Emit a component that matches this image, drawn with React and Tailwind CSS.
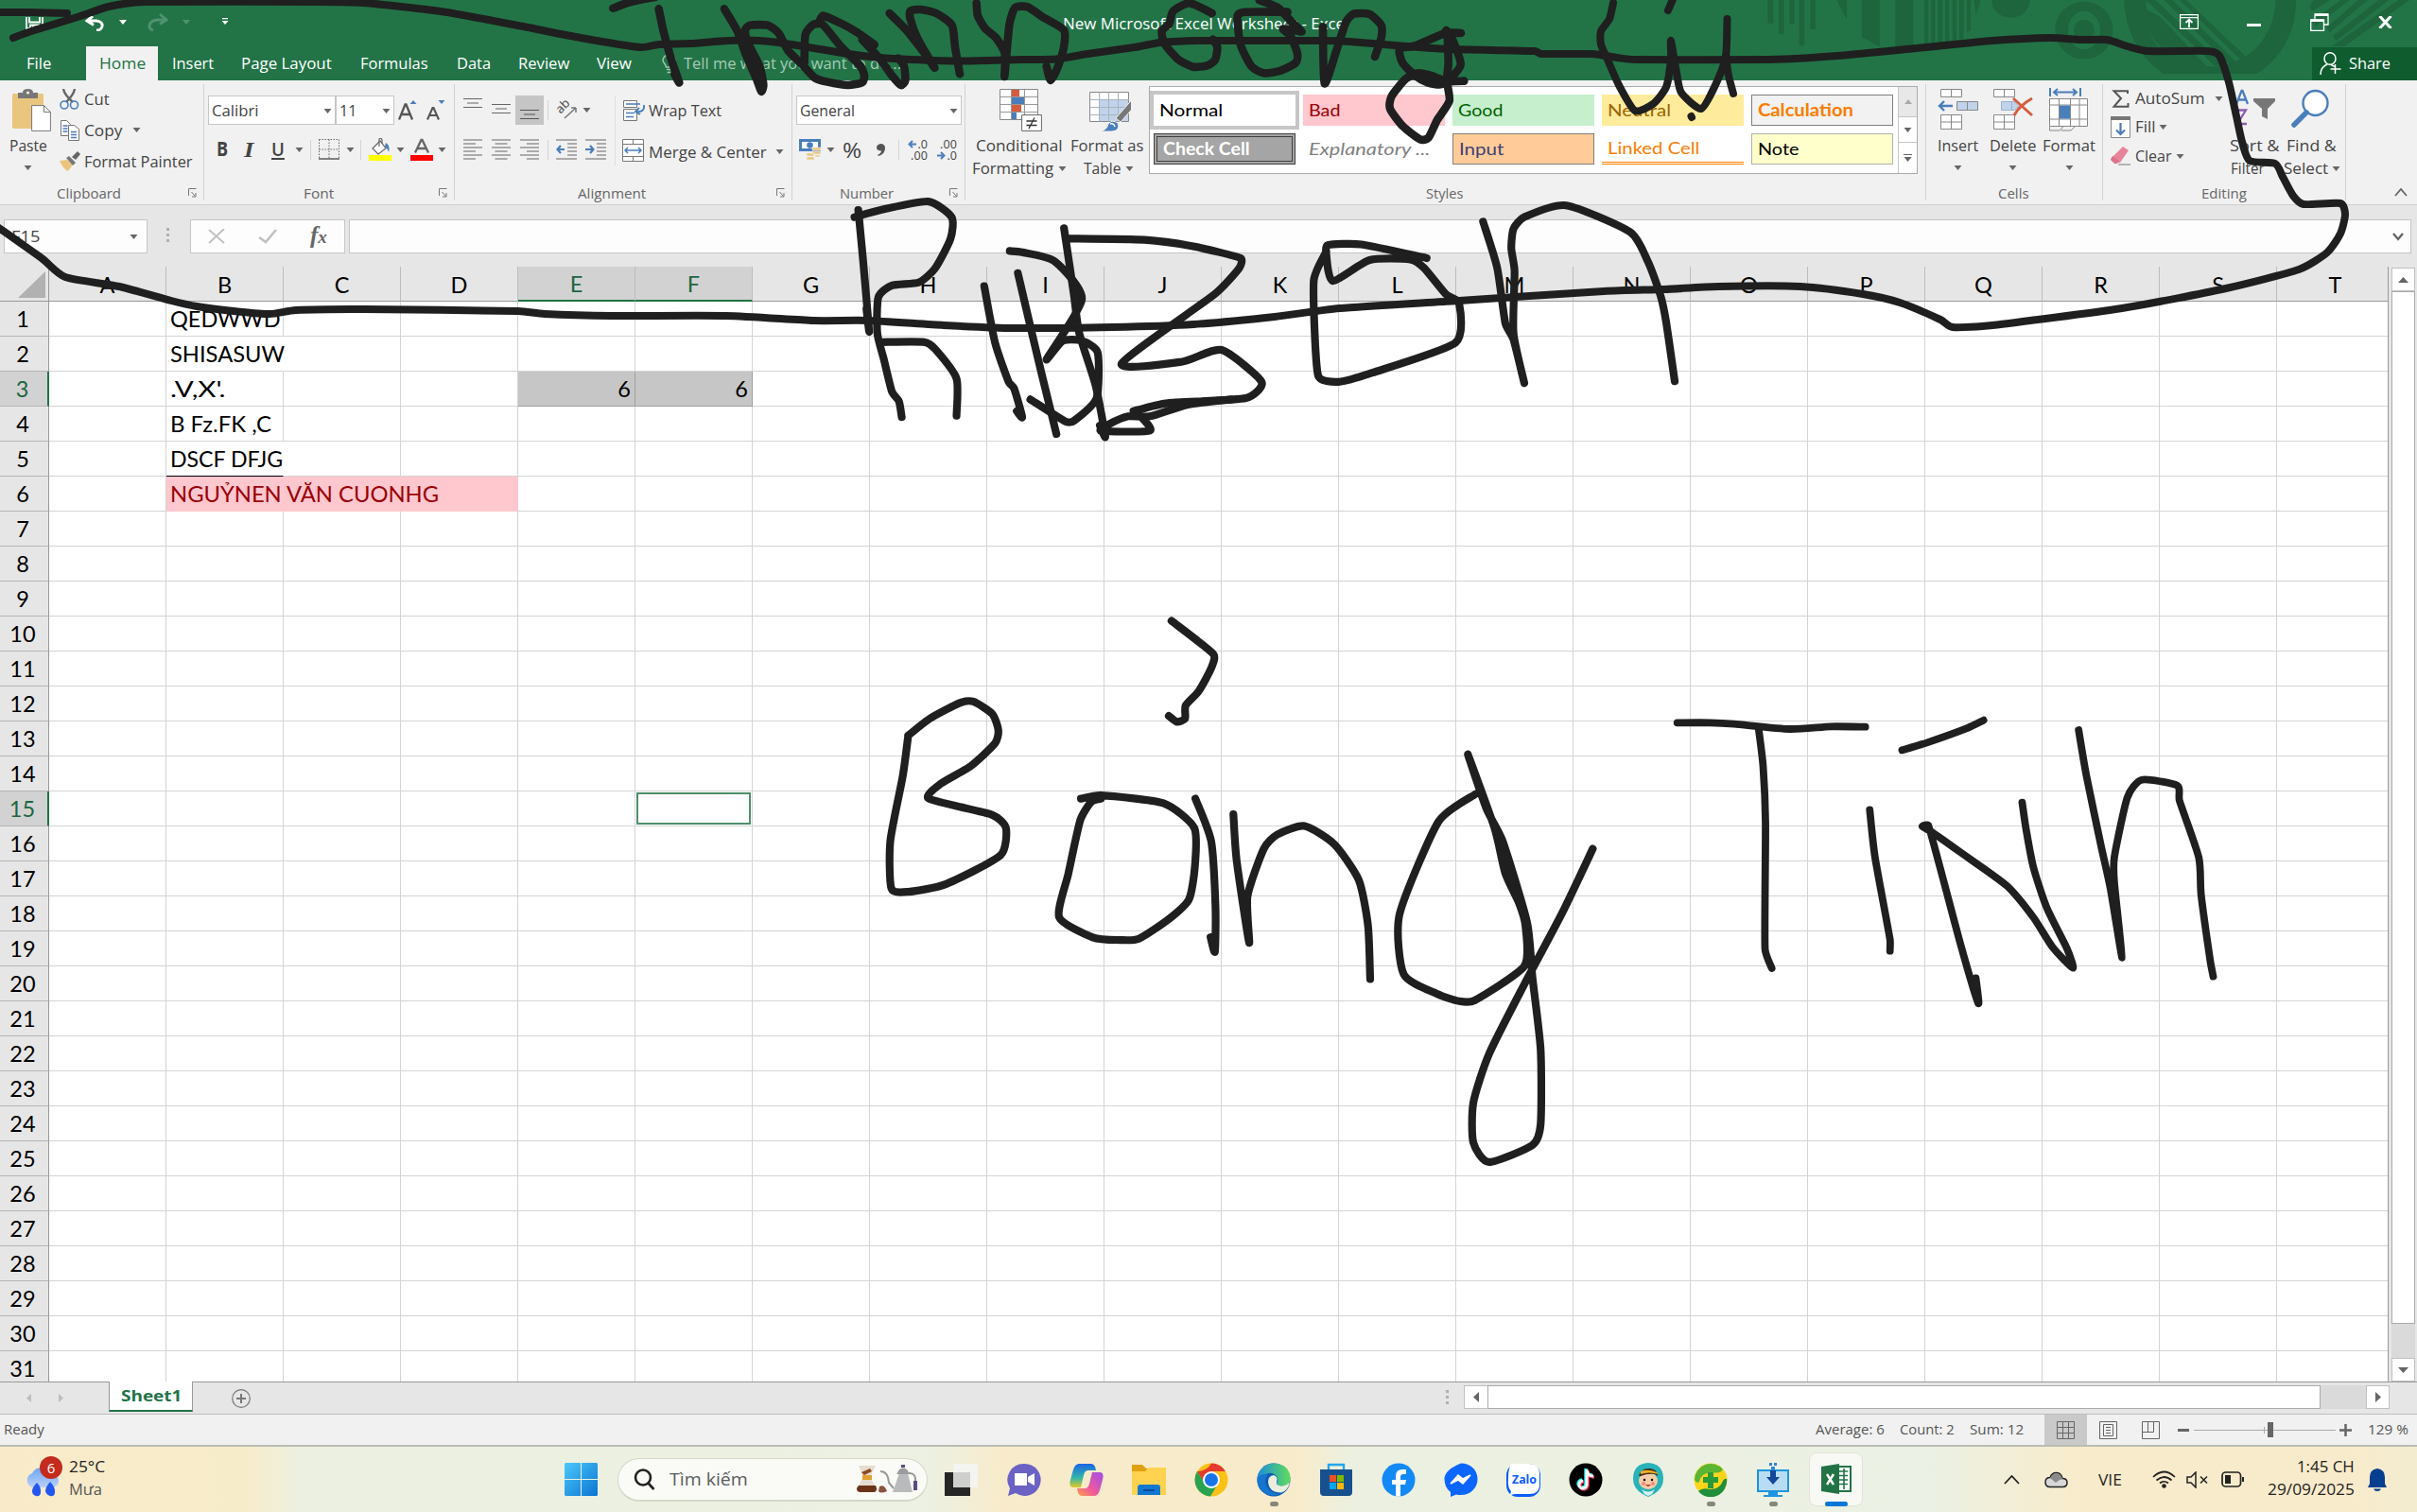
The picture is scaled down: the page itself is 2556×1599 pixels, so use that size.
import React, { useLayoutEffect, useRef } from "react";

/* Text squeezed or stretched horizontally to the width of its box. */
function Fit({ className = "", children }) {
  const outer = useRef(null);
  const inner = useRef(null);
  useLayoutEffect(() => {
    const run = () => {
      const o = outer.current;
      const i = inner.current;
      if (!o || !i || !i.offsetWidth) return;
      i.style.transform = `scaleX(${o.offsetWidth / i.offsetWidth})`;
    };
    run();
    document.fonts?.ready.then(run);
    window.addEventListener("load", run);
    return () => window.removeEventListener("load", run);
  }, []);
  return (
    <span ref={outer} className={"inline-flex shrink-0 justify-start whitespace-nowrap " + className}>
      <span ref={inner} className="inline-block origin-left">{children}</span>
    </span>
  );
}

const Caret = ({ className = "" }) => (
  <svg className={"h-[5px] w-[9px] shrink-0 " + className} viewBox="0 0 9 5"><path d="M0.5 0h8L4.5 5z" fill="#666" /></svg>
);
const Sep = ({ className = "" }) => <div className={"w-px shrink-0 bg-[#d4d4d4] " + className} />;
const GroupSep = () => <div className="mt-1 h-[123px] w-px shrink-0 bg-[#d2d2d2]" />;
const Launcher = ({ className = "" }) => (
  <svg className={"h-[10px] w-[9px] shrink-0 " + className} viewBox="0 0 9 10" fill="none" stroke="#777">
    <path d="M8.5 .5H.5V8M3.500 4l4 4.500M8 5v4H4" />
  </svg>
);

/* ---------- title bar ---------- */

function Pattern() {
  return (
    <svg className="absolute right-0 top-0 h-[85px] w-[706px]" viewBox="0 0 1568 255" preserveAspectRatio="none" fill="#1e643c">
      <path d="M43 0h13v74H43zM69 0h12v107H69zM94 0h12v74H94zM117 0h12v145h-12zM143 0h12v93h-12zM205 0h24v64zM264 0h42v148l-42-30zM343 0h42v148h-42zM411 0h9v142h-9zM427 0h9v140h-9zM443 0h10v138h-10zM460 0h9v136h-9zM477 0h9v132h-9zM493 0h10v124h-10zM511 0h9v94l-9 10zM528 0h15l-11 50z" />
      <ellipse cx="614" cy="0" rx="45" ry="56" />
      <ellipse cx="786" cy="96" rx="53" ry="76" fill="none" stroke="#1e643c" strokeWidth="30" />
      <ellipse cx="786" cy="96" rx="24" ry="33" />
      <path d="M880 0Q884 150 972 234H1192Q1284 150 1284 0H1236Q1234 100 1180 165Q1130 215 1070 210Q1000 200 955 140Q932 100 932 0z" />
      <path d="M932 30l30 20 112 160-50-10q-92-50-92-170zM932 0h22l160 208h-22zM974 0h20l150 198-16 8zM1010 0h16l142 182-12 10z" />
      <path d="M1325 0h38l-42 36-6-16zM1390 0h20l-82 84-6-18zM1430 0h22l-90 104-6-16zM1478 0h24l-124 130-8-16zM1525 0h26L1398 147h-30z" />
    </svg>
  );
}

function TitleBar() {
  return (
    <div className="relative h-[49px] w-full">
      <div className="relative flex h-[49px] items-start text-white">
        <svg className="ml-[27px] mt-[18px] h-[13px] w-[19px]" viewBox="0 0 19 13" fill="none" stroke="#fff" strokeWidth="1.800">
          <path d="M1 0v12h17V0M4 0v5.500h11V0M5 12V8.500h9V12M8 9v3" />
        </svg>
        <svg className="ml-[44px] mt-[17px] h-4 w-[21px]" viewBox="0 0 21 16" fill="none" stroke="#fff" strokeWidth="3">
          <path d="M8 0L2 5l7 4.500M2 5h10q7 1 6 6-1 4-6 4" />
        </svg>
        <svg className="ml-[15px] mt-[21px] h-[5px] w-[8px]" viewBox="0 0 8 5"><path d="M0 0h8L4 5z" fill="#fff" /></svg>
        <svg className="ml-[22px] mt-[14px] h-[19px] w-[22px]" viewBox="0 0 22 19" fill="none" stroke="#4f9270" strokeWidth="2.800">
          <path d="M13 1l7 6-7 4.500M20 7H10Q2 8 2 14q0 3 4 4" />
        </svg>
        <svg className="ml-[15px] mt-[21px] h-[5px] w-[8px]" viewBox="0 0 8 5"><path d="M0 0h8L4 5z" fill="#4f9270" /></svg>
        <svg className="ml-[33px] mt-[19px] h-[7px] w-[8px]" viewBox="0 0 8 7"><path d="M1 0h6v1.200H1zM.5 3h7L4 7z" fill="#fff" /></svg>
        <Fit className="ml-[882px] mt-[13px] w-[302px] text-[16px] leading-6">New Microsoft Excel Worksheet - Excel</Fit>
        <svg className="ml-[879px] mt-[15px] h-4 w-5" viewBox="0 0 20 16" fill="none" stroke="#fff" strokeWidth="1.200">
          <path d="M.6.6h18.800v14.800H.6zM.6 3.600h18.800" /><path d="M10 14V6M6.500 9L10 5.600 13.500 9" strokeWidth="1.800" />
        </svg>
        <div className="ml-[51px] mt-[25px] h-[3px] w-[15px] bg-white" />
        <svg className="ml-[52px] mt-[14px] h-[19px] w-5" viewBox="0 0 20 19" fill="none" stroke="#fff" strokeWidth="1.300">
          <path d="M5 6V1h14v11h-4M.7 7h13.800v11.300H.7z" /><path d="M5 1.800h14M.7 7.800h13.800" strokeWidth="2.600" />
        </svg>
        <svg className="ml-[52px] mt-[17px] h-[13px] w-[15px]" viewBox="0 0 15 13" stroke="#fff" strokeWidth="3"><path d="M1.500 0l12 13M13.500 0l-12 13" /></svg>
      </div>
    </div>
  );
}

function Tabs() {
  return (
    <div className="relative flex h-9 items-center text-[16px] text-white">
      <Fit className="ml-[28px] w-[26px]">File</Fit>
      <div className="ml-[37px] flex h-9 w-[76px] items-center justify-center bg-[#f1f1f1] text-[#217346]"><Fit className="w-[49px]">Home</Fit></div>
      <Fit className="ml-[15px] w-[44px]">Insert</Fit>
      <Fit className="ml-[29px] w-[96px]">Page Layout</Fit>
      <Fit className="ml-[30px] w-[72px]">Formulas</Fit>
      <Fit className="ml-[30px] w-[36px]">Data</Fit>
      <Fit className="ml-[29px] w-[54px]">Review</Fit>
      <Fit className="ml-[29px] w-[37px]">View</Fit>
      <svg className="ml-[32px] h-[21px] w-[15px]" viewBox="0 0 15 21" fill="none" stroke="#9cc5ad" strokeWidth="1.500">
        <path d="M4.500 14Q4 12 2.500 10 1 8 1 6.500 2 1 7.500 1T14 6.500Q14 8 12.500 10 11 12 10.500 14z M5 16.500h5M5.500 19.500h4" />
      </svg>
      <Fit className="ml-[8px] w-[230px] text-[#a6cbb5]">Tell me what you want to do...</Fit>
      <div className="ml-auto flex h-[35px] w-[111px] items-center bg-[#0f5c2f]">
        <svg className="ml-[8px] h-6 w-[23px]" viewBox="0 0 23 24" fill="none" stroke="#fff" strokeWidth="1.500">
          <ellipse cx="11" cy="7" rx="6" ry="6.300" /><path d="M1 24q0-8 7-11M12 13.500l4 2M16.500 13v10M11.500 18h11" />
        </svg>
        <Fit className="ml-[8px] w-[44px]">Share</Fit>
      </div>
    </div>
  );
}

/* ---------- ribbon ---------- */

function GroupLabel({ pad, width, children, launcher }) {
  return (
    <div className="flex h-6 items-center text-[15px] text-[#666]">
      <Fit className={pad + " " + width}>{children}</Fit>
      {launcher && <Launcher className="ml-auto mr-[7px]" />}
    </div>
  );
}

function Clipboard() {
  return (
    <div className="flex w-[215px] shrink-0 flex-col">
      <div className="flex h-[108px]">
        <div className="ml-[8px] mt-[9px] flex w-[46px] flex-col">
          <svg className="ml-[5px] h-[45px] w-[41px]" viewBox="0 0 41 45">
            <rect x="0" y="5" width="33" height="37" rx="1.500" fill="#eac57d" />
            <path d="M6 4h5q0-4 5.500-4T22 4h5v6H6z" fill="#777" /><circle cx="16.500" cy="4" r="1.600" fill="#f1f1f1" />
            <path d="M20.600 17.600h13l6.800 7v19.800H20.600z" fill="#fff" stroke="#777" /><path d="M33.500 17.600v7h7" fill="none" stroke="#777" />
          </svg>
          <Fit className="ml-[2px] mt-[3px] w-[40px] leading-6">Paste</Fit>
          <Caret className="ml-[17px] mt-[9px]" />
        </div>
        <div className="ml-[9px] mt-[3px] flex flex-col">
          <div className="flex h-[33px] items-center">
            <svg className="h-[22px] w-[22px]" viewBox="0 0 22 22" fill="none">
              <path d="M4 0q1 6 10 14M16 0Q15 6 7 14" stroke="#666" strokeWidth="2.400" />
              <ellipse cx="5" cy="17" rx="4" ry="4" stroke="#4a7ebb" strokeWidth="1.600" /><ellipse cx="15.500" cy="17" rx="4" ry="4" stroke="#4a7ebb" strokeWidth="1.600" />
            </svg>
            <Fit className="ml-[4px] w-[27px]">Cut</Fit>
          </div>
          <div className="flex h-[33px] items-center">
            <svg className="h-[22px] w-[22px]" viewBox="0 0 22 22" fill="#fff" stroke="#777">
              <path d="M1.500.5h6l4 4v12h-10z" /><path d="M9.500 5.500h6l5 4v12h-11z" />
              <path d="M3.500 6h5M3.500 9h5M3.500 12h5M12 12.500h6M12 15.500h6M12 18.500h6" stroke="#4a7ebb" strokeWidth="1.400" />
            </svg>
            <Fit className="ml-[4px] w-[41px]">Copy</Fit><Caret className="ml-[10px]" />
          </div>
          <div className="flex h-[33px] items-center">
            <svg className="h-[21px] w-[22px]" viewBox="0 0 22 21">
              <path d="M0 10l8-1 6 5-5 7q-5-2-9-11z" fill="#eac57d" /><path d="M7 7l3-2 7 7-3 3z" fill="#777" /><path d="M13 6l6-6 3 3-5 6z" fill="#666" />
            </svg>
            <Fit className="ml-[4px] w-[115px]">Format Painter</Fit>
          </div>
        </div>
      </div>
      <GroupLabel pad="ml-[60px]" width="w-[68px]" launcher>Clipboard</GroupLabel>
    </div>
  );
}

function Combo({ className, textWidth, children }) {
  return (
    <div className={"flex h-[31px] shrink-0 items-center border border-[#c6c6c6] bg-white pl-[3px] pr-[3px] pt-px " + className}>
      <Fit className={textWidth}>{children}</Fit>
      <Caret className="ml-auto" />
    </div>
  );
}

function FontGroup() {
  return (
    <div className="flex w-[264px] shrink-0 flex-col">
      <div className="flex h-[108px] flex-col">
        <div className="mt-4 flex h-[31px] items-center">
          <Combo className="ml-[4px] w-[135px]" textWidth="w-[49px]">Calibri</Combo>
          <Combo className="w-[62px]" textWidth="w-[18px]">11</Combo>
          <svg className="ml-[4px] h-[22px] w-5" viewBox="0 0 20 22"><path d="M1 20.500L7.500 4.500h1L15 20.500M3.500 15h9" fill="none" stroke="#555" strokeWidth="2.300" /><path d="M12.500 4L16 0l3.500 4z" fill="#4a7ebb" /></svg>
          <svg className="ml-[10px] h-[22px] w-5" viewBox="0 0 20 22"><path d="M1 20.500L6.500 8h1L13 20.500M3 16h8" fill="none" stroke="#555" strokeWidth="2.100" /><path d="M12.500 0L16 4l3.500-4z" fill="#4a7ebb" /></svg>
        </div>
        <div className="mt-[10px] flex h-8 items-center">
          <Fit className="ml-[13px] w-[12px] text-[21px] font-bold">B</Fit>
          <Fit className="ml-[17px] w-[10px] font-['Liberation_Serif'] text-[24px] font-bold italic leading-6">I</Fit>
          <Fit className="ml-[19px] w-[14px] text-[20px] font-semibold underline underline-offset-2">U</Fit>
          <Caret className="ml-[11px]" />
          <Sep className="ml-[7px] h-[21px]" />
          <svg className="ml-[8px] h-[22px] w-[22px]" viewBox="0 0 22 22" fill="none" stroke="#666"><path d="M.5.5h21M.5.5v20M21.500.5v20M11 .5v20M.5 11h21" strokeDasharray="1.500 1.500" /><path d="M0 21h22" strokeWidth="1.600" /></svg>
          <Caret className="ml-[7px]" />
          <Sep className="ml-[6px] h-[21px]" />
          <svg className="ml-[8px] h-6 w-6" viewBox="0 0 24 24"><path d="M0 18h24v6H0z" fill="#ff0" /><path d="M4 11l8-8 6 8-8 6z" fill="#fff" stroke="#666" strokeWidth="1.200" /><path d="M11 9V1q2-2 3 1v4" fill="none" stroke="#666" strokeWidth="1.200" /><path d="M18 5q5 3 3 10-1-4-4-6z" fill="#4a7ebb" /></svg>
          <Caret className="ml-[5px]" />
          <svg className="ml-[6px] h-6 w-6" viewBox="0 0 24 24"><path d="M0 18h24v6H0z" fill="#f00" /><path d="M5 15.500L11.500 2h1L19 15.500M7.500 11h9" fill="none" stroke="#666" strokeWidth="2.300" /></svg>
          <Caret className="ml-[5px]" />
        </div>
      </div>
      <GroupLabel pad="ml-[105px]" width="w-[32px]" launcher>Font</GroupLabel>
    </div>
  );
}

const Lines = ({ d, className = "" }) => (
  <svg className={"h-[22px] w-5 shrink-0 " + className} viewBox="0 0 20 22"><path d={d} stroke="#666" strokeWidth="1.200" /></svg>
);

function Alignment() {
  return (
    <div className="flex w-[356px] shrink-0 flex-col">
      <div className="flex h-[108px]">
        <div className="flex flex-col">
          <div className="mt-4 flex h-[31px] items-center">
            <svg className="ml-[9px] h-[31px] w-5" viewBox="0 0 20 31"><path d="M0 3.500h20M4 8h12M0 12.500h20" stroke="#666" strokeWidth="1.200" /></svg>
            <svg className="ml-[10px] h-[31px] w-5" viewBox="0 0 20 31"><path d="M0 9.500h20M4 14h12M0 18.500h20" stroke="#666" strokeWidth="1.200" /></svg>
            <svg className="ml-[5px] h-[31px] w-[30px] bg-[#c5c5c5]" viewBox="0 0 30 31"><path d="M5 15.500h20M9 20h12M5 24.500h20" stroke="#555" strokeWidth="1.200" /></svg>
            <Sep className="ml-[4px] h-[21px]" />
            <svg className="ml-[11px] h-5 w-5 overflow-visible" viewBox="0 0 20 20" fill="none" stroke="#555" strokeWidth="1.500">
              <path d="M6 18L18 7M18 7v5M18 7h-5" stroke="#777" /><text x="-1" y="4" transform="rotate(-45 6 8) translate(0 5)" fontSize="13" fill="#444" stroke="none" fontFamily="Open Sans">ab</text>
            </svg>
            <Caret className="ml-[5px]" />
          </div>
          <div className="mt-[10px] flex h-8 items-center">
            <Lines className="ml-[9px]" d="M0 1h20M0 5h13M0 9h20M0 13h13M0 17h20M0 21h13" />
            <Lines className="ml-[10px]" d="M0 1h20M3.500 5h13M0 9h20M3.500 13h13M0 17h20M3.500 21h13" />
            <Lines className="ml-[10px]" d="M0 1h20M7 5h13M0 9h20M7 13h13M0 17h20M7 21h13" />
            <Sep className="ml-[9px] h-[21px]" />
            <svg className="ml-[8px] h-[22px] w-[23px]" viewBox="0 0 23 22" fill="none"><path d="M0 1h22M12 5h10M12 9h10M12 13h10M12 17h10M0 21h22" stroke="#666" strokeWidth="1.100" /><path d="M9 11H2M5 7L1.500 11 5 15" stroke="#4a7ebb" strokeWidth="2.200" /></svg>
            <svg className="ml-[8px] h-[22px] w-[23px]" viewBox="0 0 23 22" fill="none"><path d="M0 1h22M12 5h10M12 9h10M12 13h10M12 17h10M0 21h22" stroke="#666" strokeWidth="1.100" /><path d="M0 11h8M5 7l3.500 4L5 15" stroke="#4a7ebb" strokeWidth="2.200" /></svg>
          </div>
        </div>
        <Sep className="ml-[8px] mt-[17px] h-[73px] bg-[#dedede]" />
        <div className="flex flex-col">
          <div className="mt-4 flex h-[31px] items-center">
            <svg className="ml-[8px] h-[22px] w-[23px]" viewBox="0 0 23 22" fill="#fff" stroke="#777"><path d="M.5.5h14v7H.5zM.5 9.500h14v12H.5z" /><path d="M3 4h15M3 13.500h9M3 17.500h8" stroke="#4a7ebb" strokeWidth="1.300" /><path d="M22 5q1 8-8 7M17 8l-4 4 5 3" fill="none" stroke="#4a7ebb" strokeWidth="1.900" /></svg>
            <Fit className="ml-[4px] w-[77px]">Wrap Text</Fit>
          </div>
          <div className="mt-[11px] flex h-8 items-center">
            <svg className="ml-[7px] h-6 w-[23px]" viewBox="0 0 23 24" fill="#fff" stroke="#777"><path d="M.5.5h22v23H.5zM.5 5.500h22M.5 18.500h22M11.500.5v5M11.500 18.500v5" /><path d="M3 12h17M6 9l-3 3 3 3M17 9l3 3-3 3" fill="none" stroke="#4a7ebb" strokeWidth="1.500" /></svg>
            <Fit className="ml-[5px] mt-[3px] w-[125px]">Merge &amp; Center</Fit><Caret className="ml-[9px] mt-[3px]" />
          </div>
        </div>
      </div>
      <GroupLabel pad="ml-[130px]" width="w-[72px]" launcher>Alignment</GroupLabel>
    </div>
  );
}

function NumberGroup() {
  return (
    <div className="flex w-[182px] shrink-0 flex-col">
      <div className="flex h-[108px] flex-col">
        <div className="mt-4 flex h-[31px]"><Combo className="ml-[4px] w-[175px]" textWidth="w-[58px]">General</Combo></div>
        <div className="mt-[10px] flex h-8 items-center">
          <svg className="ml-[7px] h-[22px] w-[23px]" viewBox="0 0 23 22"><path d="M0 0h23v13H0z" fill="#4a7ebb" /><path d="M3 3h17v7H3z" fill="#fff" /><circle cx="11.500" cy="6.500" r="3.300" fill="#4a7ebb" />
            <path d="M14 9h9v3h-9zM14 13h9v3h-9zM8 15h8v3H8zM8 19h8v3H8zM17 17h5v2h-5z" fill="#eac57d" stroke="#f1f1f1" strokeWidth=".6" /></svg>
          <Caret className="ml-[6px]" />
          <Fit className="ml-[8px] w-[20px] text-[22px] leading-8">%</Fit>
          <svg className="ml-[16px] h-[13px] w-[9px]" viewBox="0 0 9 13"><path d="M4 0q5 0 5 4.500Q9 11 2 13l-1-1q4-2 4-4.500H4Q0 7 0 4t4-4z" fill="#555" /></svg>
          <Sep className="ml-[14px] h-[21px]" />
          <svg className="ml-[9px] h-6 w-[23px] overflow-visible" viewBox="0 0 23 24" fontSize="12.500" fill="#444" fontFamily="Open Sans"><text x="10.500" y="11">.0</text><text x="3" y="23" textLength="18">.00</text><path d="M9 6.500H2M5 3L1.500 6.500 5 10" stroke="#4a7ebb" strokeWidth="2" fill="none" /></svg>
          <svg className="ml-[8px] h-6 w-[23px] overflow-visible" viewBox="0 0 23 24" fontSize="12.500" fill="#444" fontFamily="Open Sans"><text x="3" y="11" textLength="18">.00</text><text x="10.500" y="23">.0</text><path d="M0 18.500h7M4 15L7.500 18.500 4 22" stroke="#4a7ebb" strokeWidth="2" fill="none" /></svg>
        </div>
      </div>
      <GroupLabel pad="ml-[50px]" width="w-[57px]" launcher>Number</GroupLabel>
    </div>
  );
}

function StyleCell({ className = "", textClass = "", children }) {
  return (
    <div className={"flex h-[33px] w-[150px] items-center pl-[6px] " + className}>
      <Fit className={textClass}>{children}</Fit>
    </div>
  );
}

function Styles() {
  return (
    <div className="flex w-[1015px] shrink-0 flex-col">
      <div className="flex h-[108px]">
        <div className="ml-[7px] mt-[9px] flex w-[101px] flex-col">
          <svg className="ml-[29px] h-[45px] w-[45px]" viewBox="0 0 45 45"><path d="M.5.5h40v32H.5z" fill="#fff" stroke="#888" /><path d="M.5 8.500h40M.5 16.500h40M.5 24.500h40M12.500.5v32M26.500.5v32" stroke="#999" fill="none" /><path d="M13 1h8v7h-8zM13 17h10v7H13z" fill="#d65c3f" /><path d="M13 9h13v7H13zM13 25h5v7h-5z" fill="#4a7ebb" /><path d="M23.600 27.600h20.800v16.800H23.600z" fill="#fff" stroke="#666" /><path d="M28.500 34h11M28.500 38.500h11M37 30.500l-6 11.500" stroke="#333" strokeWidth="1.300" /></svg>
          <Fit className="ml-[4px] mt-[3px] w-[91px] leading-6">Conditional</Fit>
          <div className="flex items-center"><Fit className="w-[86px] leading-6">Formatting</Fit><Caret className="ml-[5px]" /></div>
        </div>
        <div className="ml-[3px] mt-[9px] flex w-[79px] flex-col">
          <svg className="ml-[20px] h-[45px] w-[45px]" viewBox="0 0 45 45"><path d="M.5 3.500h41v31H.5z" fill="#fff" stroke="#888" /><path d="M11 12h30v22H11z" fill="#c0d3ea" /><path d="M.5 11.500h41M.5 19.500h41M.5 27.500h41M10.500 3.500v31M20.500 3.500v31M30.500 3.500v31" stroke="#a9b4c0" fill="none" /><path d="M44.500 12v10L33 35l-5-4z" fill="#777" stroke="#f1f1f1" /><path d="M12 45q7-2 8-8 4-5 10-1 3 8-6 9z" fill="#4a7ebb" stroke="#f1f1f1" /><path d="M22 37q4-1 5 3" stroke="#fff" strokeWidth="1.500" fill="none" /></svg>
          <Fit className="mt-[3px] w-[78px] leading-6">Format as</Fit>
          <div className="flex items-center"><Fit className="ml-[14px] w-[40px] leading-6">Table</Fit><Caret className="ml-[4px]" /></div>
        </div>
        <div className="ml-[4px] mt-[6px] flex h-[93px] w-[813px] border border-[#ababab] bg-white font-['Lato']">
          <div className="grid w-[791px] grid-cols-[repeat(5,150px)] content-start gap-2 pl-[4px] pt-[8px] text-[18px]">
            <StyleCell className="bg-white text-black outline-4 outline-[#c6c6c6]" textClass="w-[67px]">Normal</StyleCell>
            <StyleCell className="bg-[#ffc7ce] text-[#9c0006]" textClass="w-[34px]">Bad</StyleCell>
            <StyleCell className="bg-[#c6efce] text-[#006100]" textClass="w-[48px]">Good</StyleCell>
            <StyleCell className="bg-[#ffeb9c] text-[#9c6500]" textClass="w-[67px]">Neutral</StyleCell>
            <StyleCell className="border border-[#7f7f7f] bg-[#f2f2f2] pl-[5px] font-bold text-[#fa7d00]" textClass="w-[101px]">Calculation</StyleCell>
            <StyleCell className="border-4 border-double border-[#3f3f3f] bg-[#a5a5a5] pl-[2px] font-bold text-white" textClass="w-[92px]">Check Cell</StyleCell>
            <StyleCell className="italic text-[#7f7f7f]" textClass="w-[128px]">Explanatory ...</StyleCell>
            <StyleCell className="border border-[#7f7f7f] bg-[#ffcc99] pl-[5px] text-[#3f3f76]" textClass="w-[48px]">Input</StyleCell>
            <StyleCell className="border-b-[3px] border-double border-[#ff8001] text-[#fa7d00]" textClass="w-[97px]">Linked Cell</StyleCell>
            <StyleCell className="border border-[#b2b2b2] bg-[#ffffcc] pl-[5px] text-black" textClass="w-[43px]">Note</StyleCell>
          </div>
          <div className="flex w-[20px] flex-col border-l border-[#c6c6c6]">
            <div className="flex h-[31px] items-center justify-center bg-[#e8e8e8]"><svg className="h-[5px] w-[8px]" viewBox="0 0 8 5"><path d="M0 5h8L4 0z" fill="#aaa" /></svg></div>
            <div className="flex h-[28px] items-center justify-center border-y border-[#c6c6c6]"><Caret /></div>
            <div className="flex flex-1 flex-col items-center justify-center gap-[2px]"><div className="h-px w-[9px] bg-[#666]" /><Caret /></div>
          </div>
        </div>
      </div>
      <GroupLabel pad="ml-[487px]" width="w-[39px]">Styles</GroupLabel>
    </div>
  );
}

function Cells() {
  return (
    <div className="flex w-[186px] shrink-0 flex-col">
      <div className="flex h-[108px]">
        <div className="ml-[11px] mt-[9px] flex w-[45px] flex-col items-center">
          <svg className="h-[45px] w-[44px]" viewBox="0 0 44 45" fill="#fff" stroke="#888"><path d="M3.500.5h22v8h-22zM14.500.5v8M3.500 27.500h22v15h-22zM14.500 27.500v15M3.500 35h22" /><path d="M20.500 13.500h22v9h-22zM31.500 13.500v9" fill="#c0d3ea" /><path d="M16 18H2M7 13l-5 5 5 5" fill="none" stroke="#4a7ebb" strokeWidth="2.400" /></svg>
          <Fit className="mt-[3px] w-[43px] leading-6">Insert</Fit><Caret className="mt-[9px]" />
        </div>
        <div className="ml-[11px] mt-[9px] flex w-[49px] flex-col items-center">
          <svg className="h-[45px] w-[44px]" viewBox="0 0 44 45" fill="#fff" stroke="#888"><path d="M1.500.5h22v8h-22zM12.500.5v8M1.500 27.500h22v15h-22zM12.500 27.500v15M1.500 35h22" /><path d="M9.500 13.500h14l4 5-4 4h-14zM20.500 13.500v9" fill="#c0d3ea" stroke="#9bb3d0" /><path d="M22 10l20 18M42 10Q28 18 23 28" fill="none" stroke="#d65c3f" strokeWidth="3" /></svg>
          <Fit className="mt-[3px] w-[49px] leading-6">Delete</Fit><Caret className="mt-[9px]" />
        </div>
        <div className="ml-[7px] mt-[8px] flex w-[56px] flex-col items-center">
          <svg className="h-[46px] w-[42px]" viewBox="0 0 42 46" fill="#fff" stroke="#888"><path d="M.5 11.500h40v29H.5zM.5 18h40M.5 33h40M10.500 11.500v29M22.500 11.500v29M32 11.500v29" /><path d="M11 18.500h11v14H11z" fill="#4a7ebb" stroke="none" /><path d="M.5 41v4h11l3-4M13 45h10l4-4" fill="none" /><path d="M1 0v9M33 0v9M5 4.500h24M9 1L5 4.500 9 8M25 1l4 3.500L25 8" stroke="#4a7ebb" strokeWidth="2" fill="none" /></svg>
          <Fit className="mt-[3px] w-[56px] leading-6">Format</Fit><Caret className="mt-[9px]" />
        </div>
      </div>
      <GroupLabel pad="ml-[76px]" width="w-[33px]">Cells</GroupLabel>
    </div>
  );
}

function Editing() {
  return (
    <div className="flex w-[256px] shrink-0 flex-col">
      <div className="flex h-[108px]">
        <div className="ml-[8px] mt-[4px] flex w-[126px] flex-col">
          <div className="flex h-[30px] items-center">
            <svg className="h-[19px] w-[22px]" viewBox="0 0 22 19"><path d="M18 4V1.200H3.500L11 9l-7.500 8.800H18.500V14" fill="none" stroke="#555" strokeWidth="2" /></svg>
            <Fit className="ml-[4px] w-[74px]">AutoSum</Fit><Caret className="ml-[10px]" />
          </div>
          <div className="flex h-[30px] items-center">
            <svg className="h-[23px] w-[22px]" viewBox="0 0 22 23"><path d="M.5.5h20v22H.5z" fill="#fff" stroke="#888" /><path d="M0 0h21v4H0z" fill="#777" /><path d="M10.500 7v12M6 14.500l4.500 4.500 4.500-4.500" fill="none" stroke="#4a7ebb" strokeWidth="2.200" /></svg>
            <Fit className="ml-[4px] w-[21px]">Fill</Fit><Caret className="ml-[4px]" />
          </div>
          <div className="flex h-[32px] items-center">
            <svg className="h-5 w-[22px]" viewBox="0 0 22 20"><path d="M13 0l6 4-9 13H4L0 13z" fill="#e8849a" /><path d="M2 10l7 5-2 3H4L0 14z" fill="#d9748b" /><path d="M8 19h13" stroke="#777" /></svg>
            <Fit className="ml-[4px] w-[39px]">Clear</Fit><Caret className="ml-[4px]" />
          </div>
        </div>
        <div className="mt-[9px] flex w-[55px] flex-col">
          <svg className="ml-[6px] h-[45px] w-[43px]" viewBox="0 0 43 45" fill="none"><path d="M1 16L6.500 2h1L13 16M3 11.500h8" stroke="#4a7ebb" strokeWidth="2.300" /><path d="M2 22.500h9L2 37h10" stroke="#8e5bb0" strokeWidth="2.300" /><path d="M19 10h23v3l-8 8v11l-6-3v-8l-9-8z" fill="#777" /></svg>
          <Fit className="mt-[3px] w-[52px] leading-6">Sort &amp;</Fit>
          <Fit className="ml-px w-[36px] leading-6">Filter</Fit>
        </div>
        <div className="ml-[2px] mt-[9px] flex w-[60px] flex-col">
          <svg className="ml-[8px] h-[45px] w-[43px]" viewBox="0 0 43 45" fill="none"><circle cx="25.500" cy="15" r="13" fill="#fff" stroke="#4a7ebb" strokeWidth="2.400" /><path d="M16 25L3 38" stroke="#4a7ebb" strokeWidth="5.500" strokeLinecap="round" /></svg>
          <Fit className="ml-[3px] mt-[3px] w-[53px] leading-6">Find &amp;</Fit>
          <div className="flex items-center"><Fit className="w-[47px] leading-6">Select</Fit><Caret className="ml-[4px]" /></div>
        </div>
      </div>
      <GroupLabel pad="ml-[104px]" width="w-[48px]">Editing</GroupLabel>
    </div>
  );
}

function Ribbon() {
  return (
    <div className="flex h-[132px] border-b border-[#cfcfcf] bg-[#f1f1f1] text-[16px] text-[#444]">
      <Clipboard /><GroupSep /><FontGroup /><GroupSep /><Alignment /><GroupSep /><NumberGroup /><GroupSep />
      <Styles /><GroupSep /><Cells /><GroupSep /><Editing /><GroupSep />
      <svg className="ml-[51px] mt-[114px] h-[9px] w-[14px]" viewBox="0 0 14 9"><path d="M1 8l6-7 6 7" fill="none" stroke="#666" strokeWidth="1.800" /></svg>
    </div>
  );
}

function FormulaBar() {
  return (
    <div className="flex h-[65px] items-start bg-[#e6e6e6] pt-[15px]">
      <div className="ml-[4px] flex h-[36px] w-[152px] items-center border border-[#c6c6c6] bg-[#fdfdfd] pl-[7px] pr-[9px] text-[16px] text-[#444]">
        <Fit className="w-[31px]">F15</Fit><Caret className="ml-auto" />
      </div>
      <div className="ml-[20px] mt-[9px] flex flex-col gap-[3px]">
        <div className="h-[3px] w-[3px] bg-[#b0b0b0]" /><div className="h-[3px] w-[3px] bg-[#b0b0b0]" /><div className="h-[3px] w-[3px] bg-[#b0b0b0]" />
      </div>
      <div className="ml-[22px] flex h-[36px] w-[164px] items-center border border-[#c6c6c6] bg-[#fdfdfd]">
        <svg className="ml-[18px] h-4 w-[18px]" viewBox="0 0 18 16"><path d="M1 1l16 14M17 0L1 15" stroke="#c0c0c0" strokeWidth="1.900" /></svg>
        <svg className="ml-[35px] h-4 w-[20px]" viewBox="0 0 20 16"><path d="M1 9l7 5L19 1" fill="none" stroke="#c0c0c0" strokeWidth="2.600" /></svg>
        <span className="ml-[35px] font-['Liberation_Serif'] text-[25px] font-bold italic leading-7 text-[#666]">f<span className="text-[19px]">x</span></span>
      </div>
      <div className="ml-[4px] flex h-[36px] w-[2181px] items-center border border-[#c6c6c6] bg-[#fdfdfd]">
        <svg className="ml-auto mr-[7px] h-[9px] w-[12px]" viewBox="0 0 12 9"><path d="M1 1l5 6 5-6" fill="none" stroke="#666" strokeWidth="2.400" /></svg>
      </div>
    </div>
  );
}

/* ---------- sheet ---------- */

const COLS = "ABCDEFGHIJKLMNOPQRST".split("");
const ROWS = Array.from({ length: 31 }, (_, i) => i + 1);
const TEXT = {
  B1: ["QEDWWD", "w-[117px]"],
  B2: ["SHISASUW", "w-[121px]"],
  B3: [".V,X'.", "w-[58px]"],
  B4: ["B Fz.FK ,C", "w-[107px]"],
  B5: ["DSCF DFJG", "w-[119px]"],
  B6: ["NGUỶNEN VĂN CUONHG", "w-[284px]"],
};

function Cell({ col, row }) {
  const id = col + row;
  const t = TEXT[id];
  const pink = row === 6 && "BCD".includes(col);
  const gray = id === "E3" || id === "F3";
  let look = "border-[#d4d4d4]";
  if (pink) look = "border-[#ffc7ce] bg-[#ffc7ce] text-[#9c0006]";
  if (gray) look = "border-[#a0a0a0] bg-[#c6c6c6]";
  if (id === "B2") look = "border-r-transparent border-b-[#d4d4d4]";
  if (id === "B5") look = "border-r-transparent border-b-black";
  return (
    <div className={"relative flex h-[37px] shrink-0 items-center border-b border-r " + (col === "T" ? "w-[118px] " : "w-[124px] ") + look}>
      {t && <Fit className={"relative z-10 ml-[4px] " + t[1]}>{t[0]}</Fit>}
      {gray && <span className="ml-auto mr-[4px]">6</span>}
      {id === "F15" && <div className="absolute inset-x-[1px] inset-y-[1px] border-2 border-[#217346]/80" />}
    </div>
  );
}

function ColHeader({ name }) {
  const on = name === "E" || name === "F";
  return (
    <div className={"flex h-[37px] shrink-0 items-center justify-center border-r pt-px " + (name === "T" ? "w-[118px] border-r-transparent pl-[6px] " : "w-[124px] border-r-[#bdbdbd] ") + (on ? "border-b-2 border-b-[#217346] bg-[#d2d2d2] text-[#1d6640]" : "border-b border-b-[#999]")}>
      <span>{name}</span>
    </div>
  );
}

function Sheet() {
  return (
    <div className="flex h-[1179px] bg-[#e6e6e6] font-['Lato'] text-[23.500px] leading-7 text-black">
      <div className="flex w-[2526px] flex-col overflow-hidden border-r border-[#999]">
        <div className="flex">
          <div className="flex h-[37px] w-[52px] shrink-0 items-end justify-end border-b border-r border-[#999] pb-[3px] pr-[3px]">
            <svg className="h-[28px] w-[29px]" viewBox="0 0 29 28"><path d="M29 0v28H0z" fill="#b1b1b1" /></svg>
          </div>
          {COLS.map((c) => <ColHeader key={c} name={c} />)}
        </div>
        <div className="h-[1142px] overflow-hidden bg-white">
          {ROWS.map((r) => (
            <div key={r} className="flex">
              <div className={"flex h-[37px] w-[52px] shrink-0 items-center justify-center border-b border-b-[#b5b5b5] pr-[3px] " + (r === 3 || r === 15 ? "border-r-2 border-r-[#217346] bg-[#d2d2d2] text-[#1d6640]" : "border-r border-r-[#999] bg-[#e6e6e6]")}>{r}</div>
              {COLS.map((c) => <Cell key={c} col={c} row={r} />)}
            </div>
          ))}
        </div>
      </div>
      <div className="ml-[3px] mt-px flex w-[25px] flex-col bg-[#dadada]">
        <div className="flex h-[25px] items-center justify-center border border-[#c0c0c0] bg-white"><svg className="h-[6px] w-[11px]" viewBox="0 0 11 6"><path d="M0 6h11L5.500 0z" fill="#666" /></svg></div>
        <div className="h-[1092px] border border-[#ababab] bg-white" />
        <div className="mt-auto flex h-[25px] items-center justify-center border border-[#c0c0c0] bg-white"><svg className="h-[6px] w-[11px]" viewBox="0 0 11 6"><path d="M0 0h11L5.500 6z" fill="#666" /></svg></div>
      </div>
    </div>
  );
}

function SheetTabs() {
  return (
    <div className="flex h-[34px] items-start border-t border-[#999] bg-[#e6e6e6]">
      <svg className="ml-[28px] mt-[12px] h-[9px] w-[5px]" viewBox="0 0 5 9"><path d="M5 0v9L0 4.500z" fill="#bdbdbd" /></svg>
      <svg className="ml-[29px] mt-[12px] h-[9px] w-[5px]" viewBox="0 0 5 9"><path d="M0 0v9l5-4.500z" fill="#bdbdbd" /></svg>
      <div className="-mt-px ml-[48px] flex h-[32px] w-[89px] items-center justify-center border-x border-b-2 border-x-[#999] border-b-[#217346] bg-white text-[16px] font-bold text-[#217346]">
        <Fit className="w-[64px]">Sheet1</Fit>
      </div>
      <svg className="ml-[41px] mt-[7px] h-[20px] w-[20px]" viewBox="0 0 20 20" fill="none" stroke="#777"><circle cx="10" cy="10" r="9.300" strokeWidth="1.200" /><path d="M10 5v10M5 10h10" strokeWidth="2" /></svg>
      <div className="ml-[1264px] mt-[8px] flex flex-col gap-[3px]">
        <div className="h-[3px] w-[3px] bg-[#b0b0b0]" /><div className="h-[3px] w-[3px] bg-[#b0b0b0]" /><div className="h-[3px] w-[3px] bg-[#b0b0b0]" />
      </div>
      <div className="ml-[16px] mt-[3px] flex h-[25px] w-[979px] bg-[#dadada]">
        <div className="flex w-[26px] items-center justify-center border border-[#c0c0c0] bg-white"><svg className="h-[11px] w-[6px]" viewBox="0 0 6 11"><path d="M6 0v11L0 5.500z" fill="#666" /></svg></div>
        <div className="-ml-px w-[881px] border border-[#ababab] bg-white" />
        <div className="ml-auto flex w-[25px] items-center justify-center border border-[#c0c0c0] bg-white"><svg className="h-[11px] w-[6px]" viewBox="0 0 6 11"><path d="M0 0v11l6-5.500z" fill="#666" /></svg></div>
      </div>
    </div>
  );
}

function StatusBar() {
  return (
    <div className="flex h-[35px] items-center border-b-2 border-t border-b-[#b9bcb2] border-t-[#bdbdbd] bg-[#f1f1f1] text-[15px] text-[#555]">
      <Fit className="mb-[2px] ml-[4px] w-[43px]">Ready</Fit>
      <Fit className="mb-[2px] ml-[1873px] w-[73px]">Average: 6</Fit>
      <Fit className="mb-[2px] ml-[16px] w-[58px]">Count: 2</Fit>
      <Fit className="mb-[2px] ml-[16px] w-[57px]">Sum: 12</Fit>
      <div className="ml-[22px] flex h-full w-[45px] items-center justify-center bg-[#c9c9c9]">
        <svg className="h-[19px] w-[20px]" viewBox="0 0 20 19" fill="none" stroke="#666"><path d="M.5.5h18v18H.5zM.5 6.500h18M.5 12.500h18M6.500.5v18M12.500.5v18" /></svg>
      </div>
      <svg className="ml-[13px] h-[19px] w-[20px]" viewBox="0 0 20 19" fill="none" stroke="#666"><path d="M.5.5h18v18H.5zM4.500 3.500h10v12h-10zM7 6.500h5M7 9.500h5M7 12.500h5" /></svg>
      <svg className="ml-[25px] h-[19px] w-[20px]" viewBox="0 0 20 19" fill="none" stroke="#666"><path d="M.5.5h18v18H.5zM.5 11.500h12V.5M6.500.5v11" /></svg>
      <div className="ml-[18px] h-[3px] w-[12px] bg-[#666]" />
      <div className="ml-[5px] flex h-4 w-[150px] items-center">
        <div className="h-px w-[74px] bg-[#aaa]" /><div className="h-[7px] w-px bg-[#aaa]" /><div className="h-px w-[3px] bg-[#aaa]" />
        <div className="h-4 w-[6px] bg-[#666]" /><div className="h-px flex-1 bg-[#aaa]" />
      </div>
      <svg className="ml-[4px] h-[13px] w-[13px]" viewBox="0 0 13 13"><path d="M6.500 0v13M0 6.500h13" stroke="#666" strokeWidth="2.500" /></svg>
      <Fit className="mb-[2px] ml-[17px] w-[43px]">129 %</Fit>
    </div>
  );
}

/* ---------- taskbar ---------- */

const Ico = ({ children, dot }) => (
  <div className="relative flex h-full w-[66px] shrink-0 items-center justify-center">
    <svg className="h-9 w-9" viewBox="0 0 36 36">{children}</svg>
    {dot && <div className="absolute bottom-[6px] h-[5px] w-[9px] rounded-full bg-[#868679]" />}
  </div>
);

function Taskbar() {
  return (
    <div className="flex h-[69px] items-center bg-[linear-gradient(90deg,#f9ebca_0px,#f7ecca_260px,#ebf0e0_320px,#ecf1e3_980px,#f8ebcb_1060px,#f8ebcb_1370px,#ecf0e0_1430px,#ebf1e4_2040px,#f8ebcb_2200px,#f8ebcb_2480px,#f3ecd0_2556px)] text-[16px] text-[#222]">
      <div className="relative ml-[26px] mt-[-5px] h-[44px] w-[44px]">
        <svg className="mt-[4px] h-10 w-[40px]" viewBox="0 0 40 40">
          <defs><linearGradient id="cl" x1="0" y1="0" x2="0" y2="1"><stop offset="0" stopColor="#6fa5f5" /><stop offset="1" stopColor="#b8d0fa" /></linearGradient></defs>
          <path d="M8 29a8 8 0 010-15Q11 8 18 8t11 7q7 1 7 7t-7 7z" fill="url(#cl)" />
          <path d="M13 24q5 5 4 11-1 4-5 3t-4-5q0-4 5-9zM27 23q6 6 5 12-1 4-5 3t-5-5q0-4 5-10z" fill="#2457ee" />
        </svg>
        <div className="absolute right-[4px] top-0 flex h-6 w-6 items-center justify-center rounded-full bg-[#c42b1c] text-[15px] text-white">6</div>
      </div>
      <div className="mb-[3px] ml-[3px] flex flex-col leading-6"><Fit className="w-[38px]">25°C</Fit><Fit className="w-[35px] text-[#555]">Mưa</Fit></div>
      <svg className="ml-[486px] h-[35px] w-[35px]" viewBox="0 0 35 35">
        <defs><linearGradient id="wn" x1="0" y1="0" x2="1" y2="1"><stop offset="0" stopColor="#4cc9fb" /><stop offset="1" stopColor="#0a74d2" /></linearGradient></defs>
        <path d="M1 0h16v17H0V1zM18 0h16l1 1v16H18zM0 18h17v17H1l-1-1zM18 18h17v16l-1 1H18z" fill="url(#wn)" />
      </svg>
      <div className="ml-[21px] flex h-[46px] w-[328px] items-center rounded-full border border-b-2 border-[#d3d8c9] bg-[#fafbf7]">
        <svg className="ml-[16px] h-[23px] w-[23px]" viewBox="0 0 23 23" fill="none" stroke="#222" strokeWidth="2.600"><circle cx="10" cy="9.500" r="8" /><path d="M15.500 15.500l6 6.500" /></svg>
        <Fit className="ml-[15px] w-[83px] text-[19px] text-[#5b5b5b]">Tìm kiếm</Fit>
        <svg className="ml-[115px] h-[30px] w-[66px]" viewBox="0 0 66 30">
          <path d="M2 1h18l-6 12 7 12q0 4-3 4H4q-4 0-4-4l7-12z" fill="#e6dcd0" /><path d="M2 22h18l1 3q0 4-3 4H4q-4 0-4-4z" fill="#6b3416" /><path d="M6 11h10v5H6z" fill="#e0a030" /><path d="M5 8l9-4 2 3-8 4z" fill="#8b4a20" />
          <path d="M24 23q5-3 8 5-7 3-9 0z" fill="#8c5340" /><path d="M45 9h9l5 20H38z" fill="#b9babc" /><path d="M42 10h14l-3-5q-4-3-8 0z" fill="#9a9c9f" /><path d="M47 0h4v3h-4z" fill="#5a4d80" /><path d="M25 7q8 0 9 12l5 6" fill="none" stroke="#999" strokeWidth="2" /><path d="M55 9q8-1 7 10" fill="none" stroke="#999" strokeWidth="2" /><path d="M62 17v10" stroke="#5a4d80" strokeWidth="4" />
        </svg>
      </div>
      <div className="ml-[3px] flex h-full">
        <Ico><path d="M0 10h27v25H0z" fill="#262626" /><path d="M9 1h26v25H9z" fill="#f4f4f4" opacity=".85" /><path d="M9 10h18v16H9z" fill="#cfcfcd" /></Ico>
        <Ico><path d="M18 1a17 17 0 11-9 31l-8 3 2-8A17 17 0 0118 1z" fill="#6a62c4" /><path d="M8 11h13v13H8zM22 15l7-4v13l-7-4z" fill="#fff" /></Ico>
        <Ico>
          <defs><linearGradient id="cp1" x1="0" y1="0" x2="0" y2="1"><stop offset="0" stopColor="#1b66e5" /><stop offset=".6" stopColor="#30b8a8" /><stop offset="1" stopColor="#e8c820" /></linearGradient><linearGradient id="cp2" x1="1" y1="0" x2="0" y2="1"><stop offset="0" stopColor="#a04fe8" /><stop offset=".6" stopColor="#f05a9a" /><stop offset="1" stopColor="#ffa04a" /></linearGradient></defs>
          <path d="M10 1h13q4 0 5 7h-8q-4 0-5 5l-3 13H4q-5 0-3-8L4 7q2-6 6-6z" fill="url(#cp1)" /><path d="M26 35H13q-4 0-5-8h8q4 0 5-5l3-12h8q5 0 3 8l-3 11q-2 6-6 6z" fill="url(#cp2)" />
        </Ico>
        <Ico><path d="M0 2h11l4 4h20v28H0z" fill="#e0a010" /><path d="M0 9h14l4-4h18v29H0z" fill="#ffd350" /><path d="M6 34v-8q0-3 3-3h18q3 0 3 3v8z" fill="#1278cf" /><path d="M12 28h12v2H12z" fill="#0a4c94" /></Ico>
        <Ico><circle cx="18" cy="18" r="17.500" fill="#fbc116" /><path d="M18 .5A17.500 17.500 0 013 9l8 13 7-13h15A17.500 17.500 0 0018 .5z" fill="#e33b2e" /><path d="M3 9a17.500 17.500 0 0014 26.500L25 22l-14 0z" fill="#29a352" /><circle cx="18" cy="18" r="9" fill="#fff" /><circle cx="18" cy="18" r="7" fill="#1a73e8" /></Ico>
        <Ico dot>
          <defs><linearGradient id="ed" x1="0" y1="0" x2="1" y2="0"><stop offset="0" stopColor="#1b8fdc" /><stop offset="1" stopColor="#5fdc5a" /></linearGradient></defs>
          <circle cx="18" cy="18" r="17.500" fill="#0f5db0" /><path d="M.5 17A17.500 17.500 0 0118 .5q17 1 17.500 16 0 8-9 8-6 0-5-4 2-3-1-7-4-4-10-2Q3 13 .5 17z" fill="url(#ed)" /><path d="M12 20q0-6 6-7 5 2 3 7-1 4 5 4.500 5 0 9-4-2 9-9 11-13 0-14-11.500z" fill="#eceedd" /><path d="M.5 18Q1 11 12 12q-6 8 0 15 6 7 14 5-8 5-16 1Q0 28 .5 18z" fill="#1675cc" />
        </Ico>
        <Ico><path d="M10 8V2h16v6" fill="none" stroke="#24a6ef" strokeWidth="2.400" /><path d="M1 7h34v24q0 4-4 4H5q-4 0-4-4z" fill="#17508e" /><path d="M11 13h7v7h-7z" fill="#f25022" /><path d="M19 13h7v7h-7z" fill="#7fba00" /><path d="M11 21h7v7h-7z" fill="#00a4ef" /><path d="M19 21h7v7h-7z" fill="#ffb900" /></Ico>
        <Ico><circle cx="18" cy="18" r="17.500" fill="#1389f5" /><path d="M15 35.500V23h-4v-5h4v-4q0-7 7-7h4v5h-3q-3 0-3 3v3h6l-1 5h-5v12.500z" fill="#fff" /></Ico>
        <Ico><path d="M18 .5c10 0 17.500 7 17.500 16.500S28 34 18 34q-3 0-5-.5L7 36v-5Q.5 26 .5 17 .5 7.500 18 .5z" fill="#0a66ff" /><path d="M7 22l8-9 5 4 8-4-8 9-5-4z" fill="#fff" stroke="#fff" strokeWidth="1.500" /></Ico>
        <Ico><rect x="0" y="1" width="36" height="35" rx="12" fill="#0b5cff" /><path d="M6 1h18q11 0 11 11v11q0 10-11 10H9l-5 1 1-4q-4-4-3-14Q2 4 6 1z" fill="#fff" /><text x="6" y="22" fontSize="12" fontWeight="700" fill="#0b5cff" textLength="26" lengthAdjust="spacingAndGlyphs" fontFamily="Open Sans">Zalo</text></Ico>
        <Ico><circle cx="18" cy="18" r="17.500" fill="#000" /><path d="M19 7v16a4 4 0 11-4-4M19 8q1 6 7 6" fill="none" stroke="#25f4ee" strokeWidth="3.500" transform="translate(-1 -1)" /><path d="M19 7v16a4 4 0 11-4-4M19 8q1 6 7 6" fill="none" stroke="#fe2c55" strokeWidth="3.500" transform="translate(1 1)" /><path d="M19 7v16a4 4 0 11-4-4M19 8q1 6 7 6" fill="none" stroke="#fff" strokeWidth="3" /></Ico>
        <Ico><path d="M18 0q16 1 16 17 0 10-10 16l-6 3-6-3Q2 27 2 17 2 1 18 0z" fill="#27b3b8" /><ellipse cx="18" cy="19" rx="10" ry="9" fill="#f6cda8" /><path d="M8 14q3-9 12-8 8 1 8 8l-3-2q-8-1-15 2z" fill="#3a2a1c" /><path d="M10 9q8-3 17 1l2 2q-10-3-19 0z" fill="#f0b020" /><path d="M11 28q7 5 14 0l-3 5-4 2-4-2z" fill="#d8f0ee" /><circle cx="14" cy="18" r="1.200" /><circle cx="22" cy="18" r="1.200" /><circle cx="13" cy="22" r="2" fill="#ee8d7a" /><circle cx="23" cy="22" r="2" fill="#ee8d7a" /><path d="M15 23q3 4 6 0z" fill="#c33" /></Ico>
        <Ico dot><circle cx="18" cy="18" r="17.500" fill="#fcd51a" /><path d="M1 18A17 17 0 0131 7q-3 5-11 3Q8 10 6 20q-3 2-5-2z" fill="#5ab534" /><path d="M35 17A17 17 0 015 30q4-4 12-2 11 0 14-9 2-3 4-2z" fill="#1f8f3a" /><path d="M15 10h6v5h5v6h-5v6h-6v-6h-5v-6h5z" fill="#2a9a38" /></Ico>
        <Ico dot><path d="M2 8h32v22H2z" fill="#b9dcf5" stroke="#1d95e0" strokeWidth="2" /><path d="M13 31h10v3h5v2H8v-2h5z" fill="#1d95e0" /><path d="M15 8h6v7h4l-7 8-7-8h4z" fill="#12479b" /><path d="M14 0h3v3h-3zM19 0h3v3h-3zM16 4h4v3h-4z" fill="#2f80d8" /></Ico>
      </div>
      <div className="relative ml-[5px] flex h-[57px] w-[57px] items-center justify-center rounded-lg border border-[#e0e3d8] bg-[#f8f9f4]">
        <svg className="mb-px h-8 w-8" viewBox="0 0 32 32"><path d="M18 3h13v26H18z" fill="#fff" stroke="#217346" strokeWidth="2" /><path d="M18 8h10M18 12.500h10M18 17h10M18 21.500h10M24 5v22" stroke="#217346" strokeWidth="1.600" /><path d="M0 3l19-3v32L0 29z" fill="#217346" /><path d="M6 11l7 11M13 11L6 22" stroke="#fff" strokeWidth="2.400" /></svg>
        <div className="absolute bottom-[-1px] h-[5px] w-6 rounded-full bg-[#0078d7]" />
      </div>
      <svg className="ml-[149px] h-[10px] w-[17px]" viewBox="0 0 17 10" fill="none" stroke="#222" strokeWidth="1.800"><path d="M1 9l7.500-8L16 9" /></svg>
      <svg className="ml-[26px] h-[18px] w-[25px]" viewBox="0 0 25 18"><path d="M6 16.500q-5 0-5-5t5-5Q8 1 13 1.500t6 6q5 0 5 4.500t-5 4.500z" fill="#d8d8d8" stroke="#222" strokeWidth="1.500" /><path d="M6 7q3-5 7-5t6 6q-4 1-7 4z" fill="#8a8a8a" /></svg>
      <Fit className="ml-[32px] w-[25px]">VIE</Fit>
      <svg className="ml-[32px] h-[19px] w-[25px]" viewBox="0 0 25 19" fill="none" stroke="#222" strokeWidth="1.700"><path d="M1 7Q12.500-4 24 7M4.500 10.500q8-7 16 0M8 13.500q4.500-3.500 9 0" /><circle cx="12.500" cy="16.500" r="1.500" fill="#222" /></svg>
      <svg className="ml-[11px] h-[18px] w-[24px]" viewBox="0 0 24 18" fill="none" stroke="#222" strokeWidth="1.500"><path d="M1 6h4l5-5v16l-5-5H1zM15 5.500l7 7M22 5.500l-7 7" /></svg>
      <svg className="ml-[13px] h-[17px] w-[25px]" viewBox="0 0 25 17"><rect x="1" y="1" width="19.500" height="15" rx="3.500" fill="none" stroke="#222" strokeWidth="1.700" /><path d="M4 4h6v9H4zM22 6h2v5h-2z" fill="#222" /></svg>
      <div className="mb-[3px] ml-[24px] flex w-[92px] flex-col items-end leading-6"><Fit className="w-[61px]">1:45 CH</Fit><Fit className="w-[92px]">29/09/2025</Fit></div>
      <svg className="ml-[14px] h-[24px] w-[20px]" viewBox="0 0 20 24" fill="#063f8f"><path d="M10 0q8 1 8 9v7l2 4H0l2-4V9q0-8 8-9zM6 21.500h8q-1 2.500-4 2.500t-4-2.500z" /></svg>
    </div>
  );
}

/* ---------- handwriting ---------- */

/* Each sheet of ink: origin, units per pixel, pen width, and strokes as "x,y" lists. */
const INK = [
  { o: [0, 0], s: [1, 1], w: 8, strokes: [
    "14,40 33,33 82,18 115,7 153,2 329,2 384,3 466,12 548,27 614,40 677,50 697,47 730,46 770,43 803,43 837,47 897,57 930,61 963,63 1017,64.5 1080,63 1117,62.5 1150,57 1200,50 1227,45 1267,43 1400,43 1427,44 1487,49 1533,52 1623,54 1630,57 1683,57 1710,61 1729,63 1871,63 1943,59 2036,50 2107,43 2168,40 2200,42 2228,42 2250,49 2272,54 2335,54 2347,59 2357,87 2365,123 2371,150 2379,170 2406,173 2414,187 2425,207 2436,216 2475,215 2480,227 2475,247 2461,267 2431,285 2354,305 2244,326 2107,344 2065,346 2052,338 2009,320 1970,311 1904,303 1817,303 1760,306 1696,308 1543,318 1417,326 1348,335 1262,343 1176,346 1072,347 998,344 917,339 860,339 768,334 647,334 576,332 548,329 384,327 313,328 285,332 247,329 208,324 181,318 126,303 69,293 44,273 -4,239",
    "-4,13 30,13 71,14",
    "1706,3 1702,20 1693,33 1693,47 1700,63 1712,90 1729,117 1748,110 1762,92 1767,63 1767,43 1773,77 1778,98 1799,115 1814,90 1825,60 1826.5,20",
    "1825,60 1828,80 1833,99", "1770,-3 1764,11", "1788.5,123 1789,124",
  ] },
  { o: [630, 0], s: [3, 3], w: 8.6, strokes: [
    "55,26 110,6 190,-10", "200,28 215,100 240,190 265,262 250,235",
    "408,28 450,100 475,170 510,250 525,290 532,270 520,210 480,130 474,95 490,80 545,80 580,105 610,160 655,205 695,247 735,260 800,270 845,262 852,240 840,210 780,150 720,78 690,78 665,110 662,200",
    "712,62 722,50 780,75 830,103 884,142", "845,125 900,185 940,240 968,270 982,255 978,210 960,185",
    "932,42 985,95 1040,165 1075,215 1060,190 1020,120 998,60 998,35 1030,30 1080,42 1130,80 1140,150 1155,235",
    "1208,10 1212,50 1235,90 1270,120 1298,170 1297,242 1312,80 1330,25 1370,22 1420,55 1485,95 1485,150 1465,215 1443,255 1430,210",
  ] },
  { o: [1200, 0], s: [3, 3], w: 8.6, strokes: [
    "245,42 175,10 122,35 110,75 86,98 95,140 140,190 185,212 230,208 255,190 262,150 248,125",
    "485,38 350,38 326,50 335,140 370,210 410,232 460,225 510,200 516,170 495,115 470,92 500,95 530,100 500,72 455,25 395,0",
    "597,85 602,265 640,160 670,70 695,44 745,45 782,80 782,120 762,180",
    "1035,105 985,105 890,145 840,155 850,200 890,240 930,262 970,268 1000,250 1034,205 1010,130 988,96",
    "992,100 995,200 990,255 998,320 960,380 932,437 905,442 850,400 810,345 815,305 860,250 900,232 940,240 990,258 1045,257",
  ] },
  { o: [860, 180], s: [1.742, 1.452], w: 8.2, strokes: [
    "83,61 92,140 103,247 98,213", "76,72 130,60 212,48 255,72 253,105 225,150 195,172 145,177 120,195 118,250 130,290 145,340 158,355 163,379", "125,264 205,264 225,275 264,320 264,377",
    "315,178 335,265 360,325 370,335 385,379 375,370", "377,158 400,240 420,310 448,405",
    "362,124 385,126 445,140 495,198 430,290 460,262 495,262 524,280 522,350 480,385 465,386 400,352",
    "462,89 480,190 490,250 520,330 538,409 528,392",
    "465,105 610,107 700,117 787,135 785,150 740,190 568,297 680,294 752,276 826,325 797,350 650,358 590,370",
    "770,352 690,360 620,378 580,378 545,390 530,400 620,400 600,375",
    "1130,135 1010,114 948,115 945,128 957,170 1025,138 1100,137 1125,150 1165,190 1190,205 1183,265 1030,311 968,325 930,315 922,170 945,125",
    "1234,79 1260,150 1275,235 1290,260 1310,327 1290,250 1292,155 1286,120 1290,90 1310,72 1387,54 1505,95 1538,141 1561,193 1571,232 1587,324",
    "660,692 737,743 733,765 710,800 686,822 685,842 670,847 655,838",
    "175,868 165,930 142,1030 144,1103 175,1108 245,1096 345,1052 355,1010 330,990 213,965 235,942 290,915 335,880 341,860 330,835 295,816 270,818 215,842 175,868",
    "530,965 512,970 492,998 470,1080 453,1147 515,1178 565,1182 600,1180 655,1150 692,1120 703,1070 702,1010 645,972 530,960 493,965",
    "704,965 733,1030 741,1130 740,1200 732,1178",
    "774,989 780,1060 803,1186 800,1115 830,1042 855,1020 905,1007 960,1035 1005,1090 1022,1160 1026,1242",
    "1220,958 1152,1000 1080,1143 1088,1235 1150,1265 1190,1276 1218,1275 1310,1222 1312,1160 1300,1125 1275,1080 1255,1010 1206,897 1240,980 1270,1030 1315,1155 1325,1240 1340,1350 1340,1465 1325,1497 1245,1523 1216,1493 1216,1432 1245,1357 1310,1250 1380,1140 1436,1042",
    "1262,1020 1280,1070 1296,1110",
  ] },
  { o: [1640, 720], s: [1.96, 3], w: 7.8, strokes: [
    "262,133 330,133 380,137 495,153 580,145 652,146", "431,155 440,270 445,450 444,850 458,912", "728,220 780,196 860,152 897,125", "661,409 672,560 703,820 703,857",
    "881,943 886,1023 850,840 783,460 770,462 790,480 850,545 945,650 1000,750 1040,845 1082,911 1070,850 1028,720 1000,590 985,470 977,386",
    "1094,156 1110,300 1140,520 1160,660 1184,878 1168,640 1168,560 1195,370 1225,314 1298,332 1303,380 1343,560 1348,680 1367,890 1373,938",
  ] },
];

function strokePath(text, o, s) {
  const p = text.split(" ").map((q) => {
    const [x, y] = q.split(",").map(Number);
    return [o[0] + x / s[0], o[1] + y / s[1]];
  });
  const k = 0.11;
  let d = `M${p[0][0]} ${p[0][1]}`;
  for (let i = 0; i < p.length - 1; i++) {
    const a = p[i - 1] || p[i];
    const b = p[i];
    const c = p[i + 1];
    const e = p[i + 2] || c;
    const len = Math.hypot(c[0] - b[0], c[1] - b[1]);
    const t1 = Math.min(k, (len * 0.3) / (Math.hypot(c[0] - a[0], c[1] - a[1]) || 1));
    const t2 = Math.min(k, (len * 0.3) / (Math.hypot(e[0] - b[0], e[1] - b[1]) || 1));
    d += `C${b[0] + (c[0] - a[0]) * t1} ${b[1] + (c[1] - a[1]) * t1} ${c[0] - (e[0] - b[0]) * t2} ${c[1] - (e[1] - b[1]) * t2} ${c[0]} ${c[1]}`;
  }
  return d;
}

function Ink() {
  return (
    <svg className="pointer-events-none absolute inset-0 z-50 h-[1599px] w-[2556px]" viewBox="0 0 2556 1599" fill="none" stroke="#1f1f1f" strokeLinecap="round" strokeLinejoin="round">
      {INK.map((g, i) => g.strokes.map((t, j) => <path key={i + "-" + j} strokeWidth={g.w} d={strokePath(t, g.o, g.s)} />))}
    </svg>
  );
}

export default function App() {
  return (
    <div className="relative flex h-[1599px] w-[2556px] flex-col overflow-hidden bg-white font-['Open_Sans','Noto_Sans',sans-serif]">
      <div className="relative bg-[#227447]">
        <Pattern />
        <TitleBar />
        <Tabs />
      </div>
      <Ribbon />
      <FormulaBar />
      <Sheet />
      <SheetTabs />
      <StatusBar />
      <Taskbar />
      <Ink />
    </div>
  );
}
